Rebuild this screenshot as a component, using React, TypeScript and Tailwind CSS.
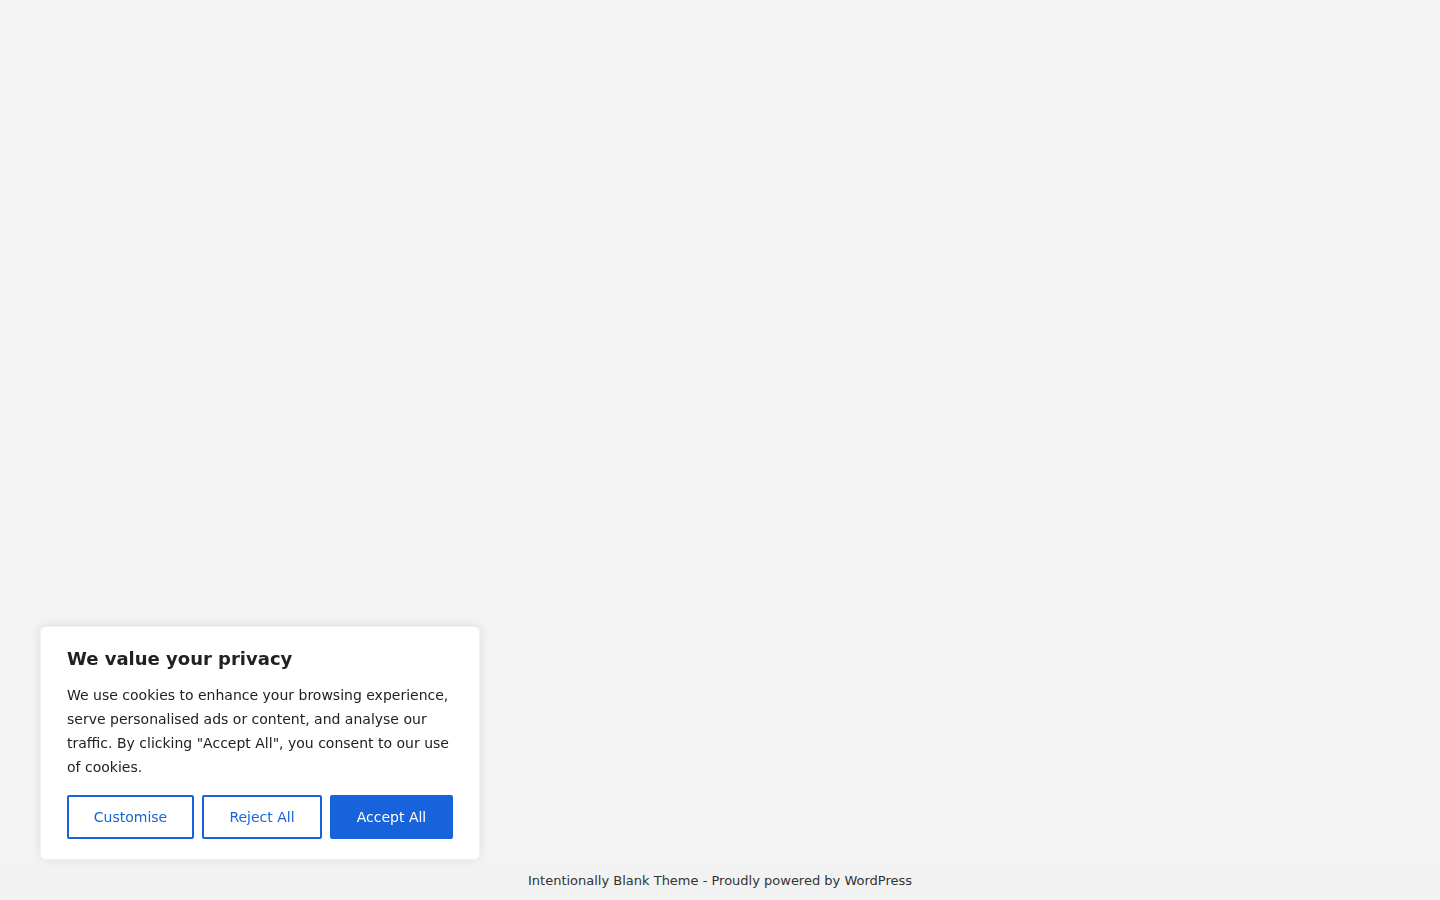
export default function App() {
    return (
        <div className="flex min-h-screen flex-col bg-[#f4f4f4] font-['DejaVu_Sans',sans-serif]">
            <main className="flex-1" />

            <footer className="flex h-[38px] items-center justify-center bg-[#f2f2f2] text-[13px] text-[#333333]">
                Intentionally Blank Theme - Proudly powered by WordPress
            </footer>

            <div className="fixed bottom-[40px] left-[40px] w-[440px] rounded-md border border-[#f0f0f0] bg-white px-[26px] pt-[20px] pb-[20px] shadow-[0_-1px_10px_0_rgba(172,171,171,0.3)]">
                <h2 className="mb-3 text-[18px] leading-6 font-bold text-[#212121]">We value your privacy</h2>
                <p className="text-[14px] leading-6 text-[#212121]">
                    We use cookies to enhance your browsing experience, serve personalised ads or content, and
                    analyse our traffic. By clicking "Accept All", you consent to our use of cookies.
                </p>
                <div className="mt-[16px] flex gap-2">
                    <button className="h-[44px] w-[127px] rounded-[2px] border-2 border-[#1863dc] bg-white text-[14px] text-[#1863dc]">
                        Customise
                    </button>
                    <button className="h-[44px] w-[120px] rounded-[2px] border-2 border-[#1863dc] bg-white text-[14px] text-[#1863dc]">
                        Reject All
                    </button>
                    <button className="h-[44px] w-[123px] rounded-[2px] border-2 border-[#1863dc] bg-[#1863dc] text-[14px] text-white">
                        Accept All
                    </button>
                </div>
            </div>
        </div>
    );
}
